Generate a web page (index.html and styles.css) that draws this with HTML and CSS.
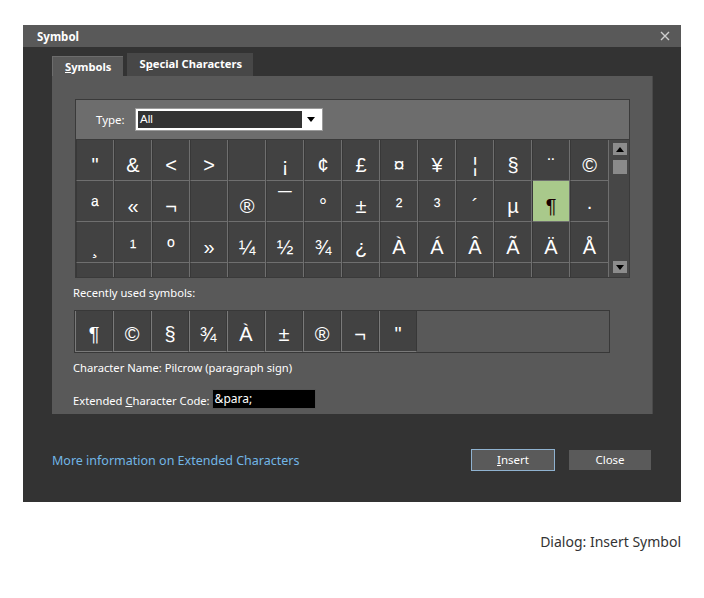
FILE: index.html
```html
<!DOCTYPE html>
<html>
<head>
<meta charset="utf-8">
<link rel="stylesheet" href="styles.css">
</head>
<body>
<div class="dialog">
  <div class="titlebar">
    <span class="title">Symbol</span>
    <svg class="close-x" width="10" height="10" viewBox="0 0 10 10"><path d="M1 1 L9 9 M9 1 L1 9" stroke="#cfcfcf" stroke-width="1.4"/></svg>
  </div>
  <div class="tabs">
    <div class="tab active"><u>S</u>ymbols</div>
    <div class="tab">S<u>p</u>ecial Characters</div>
  </div>
  <div class="panel">
    <div class="gridbox">
      <div class="typerow">
        <span class="typelabel">Type:</span>
        <div class="select"><span class="select-val">All</span><span class="select-btn"><svg width="8" height="5" viewBox="0 0 8 5"><path d="M0 0 H8 L4 5 Z" fill="#000"/></svg></span></div>
      </div>
      <div class="gridarea">
        <div class="cells">
          <div class="cell">"</div><div class="cell">&amp;</div><div class="cell">&lt;</div><div class="cell">&gt;</div><div class="cell"></div><div class="cell">¡</div><div class="cell">¢</div><div class="cell">£</div><div class="cell">¤</div><div class="cell">¥</div><div class="cell">¦</div><div class="cell">§</div><div class="cell">¨</div><div class="cell">©</div>
          <div class="cell">ª</div><div class="cell">«</div><div class="cell">¬</div><div class="cell"></div><div class="cell">®</div><div class="cell macron">¯</div><div class="cell">°</div><div class="cell">±</div><div class="cell">²</div><div class="cell">³</div><div class="cell">´</div><div class="cell">µ</div><div class="cell sel">¶</div><div class="cell">·</div>
          <div class="cell">¸</div><div class="cell">¹</div><div class="cell">º</div><div class="cell">»</div><div class="cell">¼</div><div class="cell">½</div><div class="cell">¾</div><div class="cell">¿</div><div class="cell">À</div><div class="cell">Á</div><div class="cell">Â</div><div class="cell">Ã</div><div class="cell">Ä</div><div class="cell">Å</div>
          <div class="cell"></div><div class="cell"></div><div class="cell"></div><div class="cell"></div><div class="cell"></div><div class="cell"></div><div class="cell"></div><div class="cell"></div><div class="cell"></div><div class="cell"></div><div class="cell"></div><div class="cell"></div><div class="cell"></div><div class="cell"></div>
        </div>
        <div class="scrollbar">
          <div class="sb-btn"><svg width="8" height="5" viewBox="0 0 8 5"><path d="M0 5 H8 L4 0 Z" fill="#000"/></svg></div>
          <div class="sb-thumb"></div>
          <div class="sb-space"></div>
          <div class="sb-btn"><svg width="8" height="5" viewBox="0 0 8 5"><path d="M0 0 H8 L4 5 Z" fill="#000"/></svg></div>
        </div>
      </div>
    </div>
    <div class="label recent-label">Recently used symbols:</div>
    <div class="recent">
      <div class="rcell">¶</div><div class="rcell">©</div><div class="rcell">§</div><div class="rcell">¾</div><div class="rcell">À</div><div class="rcell">±</div><div class="rcell">®</div><div class="rcell">¬</div><div class="rcell">"</div>
    </div>
    <div class="label charname">Character Name: Pilcrow (paragraph sign)</div>
    <div class="coderow">
      <span class="label">Extended <u>C</u>haracter Code:</span>
      <span class="codebox">&amp;para;</span>
    </div>
  </div>
  <div class="footer">
    <span class="link">More information on Extended Characters</span>
    <div class="buttons">
      <div class="btn primary"><u>I</u>nsert</div>
      <div class="btn">Close</div>
    </div>
  </div>
</div>
<div class="caption">Dialog: Insert Symbol</div>
</body>
</html>
```
FILE: styles.css
```css
html, body {
  margin: 0;
  padding: 0;
  background: #ffffff;
}
body {
  font-family: "Noto Sans", "Open Sans", sans-serif;
  padding: 25px 0 0 23px;
}
.dialog {
  width: 658px;
  height: 477px;
  background: #333333;
  box-sizing: border-box;
  color: #ffffff;
}
.titlebar {
  height: 22px;
  background: #595959;
  display: flex;
  align-items: center;
  justify-content: space-between;
  padding: 0 11px 0 14px;
}
.title {
  font-weight: bold;
  font-size: 11.5px;
  color: #fff;
}
.close-x { display: block; }
.tabs {
  display: flex;
  align-items: flex-end;
  margin: 6px 0 0 29px;
  height: 23px;
}
.tab {
  font-weight: bold;
  font-size: 11.2px;
  height: 23px;
  line-height: 22px;
  box-sizing: border-box;
  padding: 0 11px 0 12px;
  background: #474747;
  margin-left: 4px;
}
.tab.active {
  background: #595959;
  height: 20px;
  line-height: 20px;
  margin-left: 0;
  border-top: 1px solid #6c6c6c;
  border-left: 1px solid #6c6c6c;
  padding: 0 12px 0 12px;
}
.panel {
  margin-left: 29px;
  width: 601px;
  height: 338px;
  background: #595959;
  box-sizing: border-box;
  padding: 23px 0 0 23px;
  border-right: 1px solid #4a4a4a;
}
.gridbox {
  width: 555px;
  border: 1px solid #3a3a3a;
  box-sizing: border-box;
}
.typerow {
  height: 39px;
  background: #6d6d6d;
  border-bottom: 1px solid #3a3a3a;
  display: flex;
  align-items: center;
  padding-left: 20px;
}
.typelabel {
  font-size: 11.5px;
  width: 40px;
}
.select {
  width: 186px;
  height: 21px;
  box-sizing: border-box;
  border: 2px solid #ffffff;
  background: #333333;
  display: flex;
  outline: 1px solid #9a9a9a;
}
.select-val {
  flex: 1;
  font-family: "Liberation Sans", Arial, sans-serif;
  font-size: 11.5px;
  line-height: 17px;
  padding-left: 2px;
}
.select-btn {
  width: 18px;
  background: #ffffff;
  display: flex;
  align-items: center;
  justify-content: center;
}
.select-btn svg { display: block; }
.gridarea {
  display: flex;
  height: 137px;
  overflow: hidden;
}
.cells {
  width: 532px;
  display: grid;
  grid-template-columns: repeat(14, 38px);
  grid-auto-rows: 41px;
  background: #424242;
  border-right: 1px solid #6f6f6f;
}
.cell {
  box-sizing: border-box;
  border-right: 1px solid #6f6f6f;
  border-bottom: 1px solid #6f6f6f;
  border-left: 1px solid #383838;
  background: #424242;
  font-family: "Liberation Sans", Arial, sans-serif;
  font-size: 20px;
  line-height: 23px;
  padding-top: 14px;
  text-align: center;
  color: #ffffff;
}
.cell.macron {
  font-weight: bold;
  font-size: 24px;
  padding-top: 8px;
}
.cell:nth-child(14n) { border-right: none; }
.cell.sel {
  background: #a9c98b;
  color: #1a0000;
}
.scrollbar {
  width: 20px;
  background: #474747;
  box-sizing: border-box;
  padding: 3px 2px 4px 4px;
  display: flex;
  flex-direction: column;
}
.sb-btn {
  height: 12px;
  background: #8c8c8c;
  display: flex;
  align-items: center;
  justify-content: center;
}
.sb-btn svg { display: block; }
.sb-thumb {
  height: 14px;
  margin-top: 5px;
  background: #8a8a8a;
}
.sb-space { flex: 1; }
.label {
  font-size: 11.2px;
  line-height: 16px;
  color: #ffffff;
}
.recent-label {
  margin-top: 7px;
  margin-left: -2px;
}
.recent {
  margin-top: 9px;
  margin-left: -1px;
  width: 536px;
  height: 43px;
  box-sizing: border-box;
  border: 1px solid #383838;
  display: flex;
}
.rcell {
  width: 38px;
  height: 41px;
  box-sizing: border-box;
  background: #424242;
  border-left: 1px solid #7a7a7a;
  border-bottom: 1px solid #7a7a7a;
  border-right: 1px solid #383838;
  font-family: "Liberation Sans", Arial, sans-serif;
  font-size: 20px;
  line-height: 23px;
  padding-top: 12px;
  text-align: center;
}
.charname {
  margin-top: 7px;
  margin-left: -2px;
}
.coderow {
  margin-top: 13px;
  margin-left: -2px;
  display: flex;
  align-items: center;
}
.coderow .label { padding-top: 3px; }
.codebox {
  margin-left: 2px;
  width: 104px;
  height: 20px;
  box-sizing: border-box;
  background: #000000;
  border: 1px solid #555555;
  font-size: 12px;
  line-height: 17px;
  padding-left: 2px;
  color: #fff;
}
.footer {
  margin-top: 35px;
  padding: 0 30px 0 29px;
  height: 22px;
  display: flex;
  align-items: center;
  justify-content: space-between;
}
.link {
  color: #72b6e6;
  font-size: 12.5px;
}
.buttons {
  display: flex;
  align-items: center;
  gap: 14px;
}
.btn {
  width: 82px;
  height: 20px;
  box-sizing: border-box;
  background: #5a5a5a;
  font-size: 11.5px;
  line-height: 20px;
  text-align: center;
  color: #fff;
}
.btn.primary {
  width: 84px;
  height: 22px;
  line-height: 20px;
  border: 1px solid #8fb2d0;
}
.caption {
  width: 658px;
  text-align: right;
  margin-top: 30px;
  font-size: 14px;
  line-height: 20px;
  color: #333333;
}
```
